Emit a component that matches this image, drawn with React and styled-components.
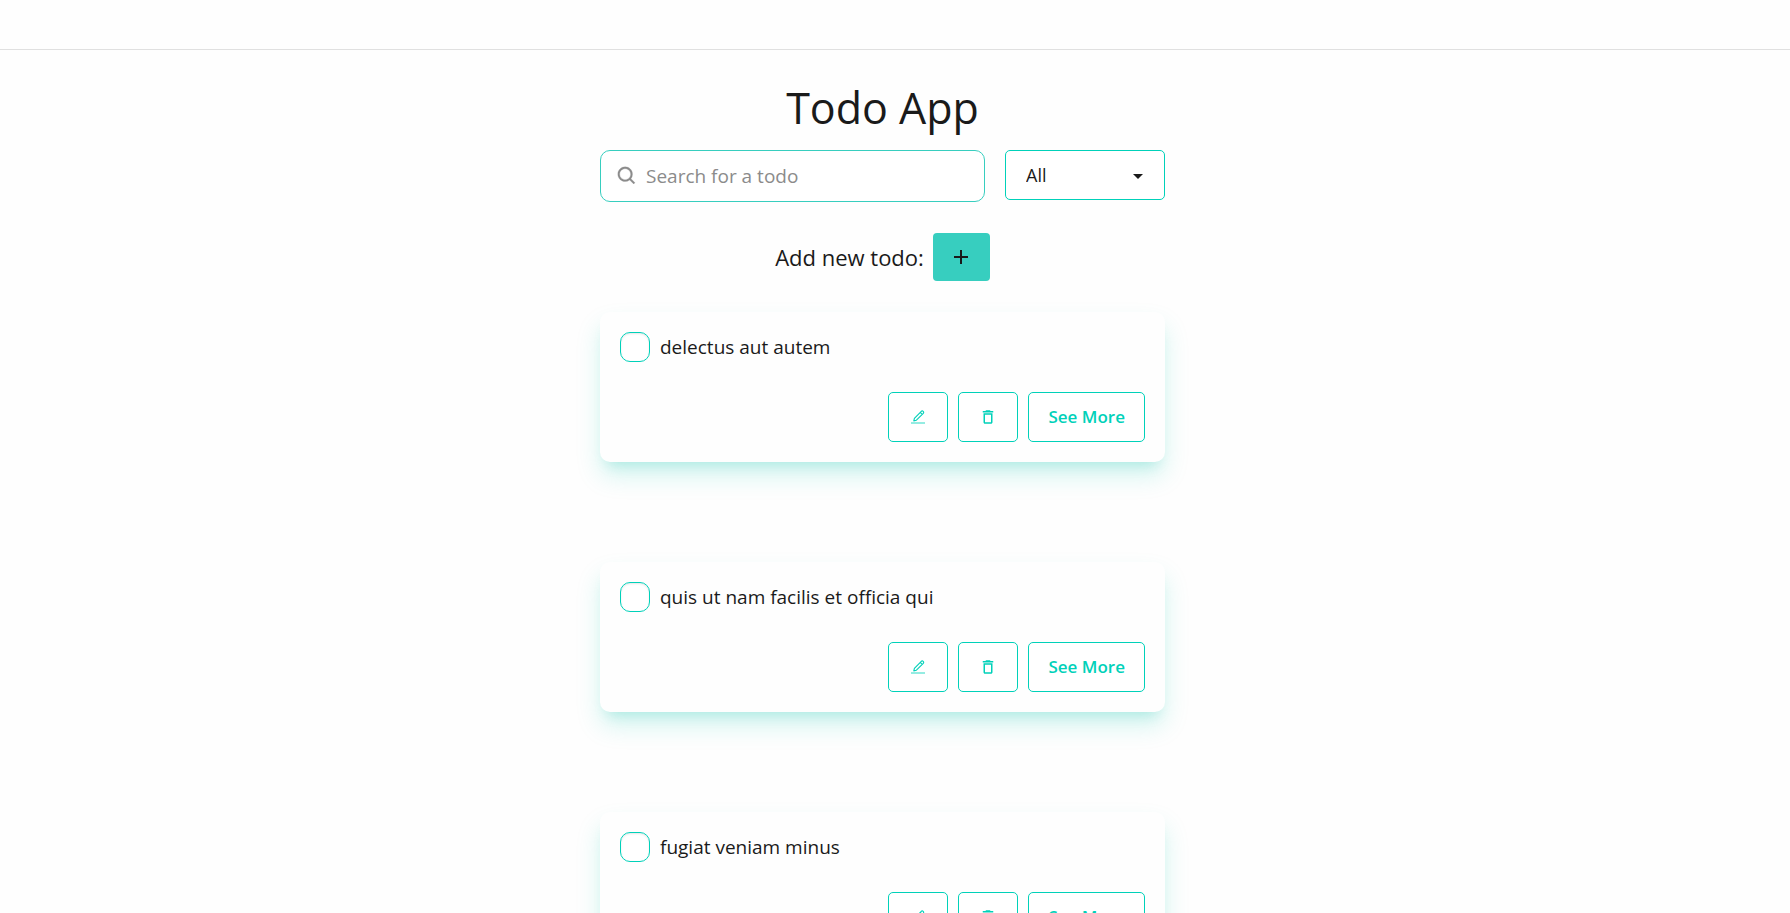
import React, { useState } from "react";
import styled, { createGlobalStyle } from "styled-components";
import { BiSearch } from "react-icons/bi";
import { MdAdd, MdDeleteOutline } from "react-icons/md";

const accent = "#00d1b9";

const GlobalStyle = createGlobalStyle`
  *, *::before, *::after { box-sizing: border-box; }
  body {
    margin: 0;
    background: #fefefe;
    color: #1a1a1a;
    font-family: "Segoe UI", "Open Sans", "Noto Sans", sans-serif;
    font-size: 19px;
    line-height: 24px;
  }
  button, input, select { font: inherit; color: inherit; }
`;

const Header = styled.header`
  height: 50px;
  border-bottom: 1px solid #e0e0e0;
`;

const Main = styled.main`
  display: flex;
  flex-direction: column;
  align-items: center;
  padding: 28px 25px 0 0;
`;

const Column = styled.div`
  display: flex;
  flex-direction: column;
  align-items: center;
  width: 100%;
  max-width: 565px;
`;

const Title = styled.h1`
  margin: 0 0 12px;
  font-size: 43px;
  font-weight: 400;
  line-height: 60px;
`;

const Filters = styled.div`
  display: flex;
  align-items: flex-start;
  gap: 20px;
  width: 100%;
`;

const SearchBox = styled.label`
  display: flex;
  flex: 1;
  align-items: center;
  gap: 8px;
  height: 52px;
  padding: 0 15px;
  border: 1px solid #37cebf;
  border-radius: 10px;
  background: #fff;
  color: #8b8b8b;
`;

const SearchInput = styled.input`
  flex: 1;
  min-width: 0;
  padding: 0;
  border: 0;
  outline: 0;
  background: transparent;
  &::placeholder { color: #8b8b8b; opacity: 1; }
`;

const SelectBox = styled.div`
  display: grid;
  align-items: center;
  width: 160px;
  height: 50px;
  border: 1px solid ${accent};
  border-radius: 5px;
  background: #fff;
  & > * { grid-area: 1 / 1; }
`;

const Select = styled.select`
  width: 100%;
  height: 100%;
  padding: 0 40px 0 20px;
  border: 0;
  border-radius: 5px;
  outline: 0;
  appearance: none;
  background: transparent;
  font-size: 18px;
`;

const Caret = styled.span`
  justify-self: end;
  margin: 2px 21px 0 0;
  border: 5px solid transparent;
  border-top-color: #1a1a1a;
  border-bottom: 0;
  pointer-events: none;
`;

const AddRow = styled.div`
  display: flex;
  align-items: center;
  gap: 9px;
  margin: 31px 0;
  font-size: 22px;
`;

const AddButton = styled.button`
  display: flex;
  align-items: center;
  justify-content: center;
  width: 57px;
  height: 48px;
  padding: 0;
  border: 0;
  border-radius: 4px;
  background: #37cebf;
`;

const TodoList = styled.ul`
  display: flex;
  flex-direction: column;
  gap: 100px;
  width: 100%;
  margin: 0;
  padding: 0 0 100px;
  list-style: none;
`;

const Card = styled.li`
  display: flex;
  flex-direction: column;
  gap: 30px;
  padding: 20px;
  border-radius: 10px;
  background: #fefefe;
  box-shadow: 0 14px 24px 0 rgba(0, 200, 180, 0.17), 0 10px 14px -8px rgba(0, 180, 160, 0.22);
`;

const TodoLabel = styled.label`
  display: flex;
  align-items: center;
  gap: 10px;
`;

const Checkbox = styled.input`
  width: 30px;
  height: 30px;
  margin: 0;
  border: 1px solid ${accent};
  border-radius: 10px;
  appearance: none;
  background: #fff;
  box-shadow: inset 0 1px 2px rgba(0, 0, 0, 0.1);
  &:checked { background: ${accent}; }
`;

const Actions = styled.div`
  display: flex;
  justify-content: flex-end;
  gap: 10px;
`;

const OutlineButton = styled.button`
  display: flex;
  align-items: center;
  justify-content: center;
  width: ${({ $icon }) => ($icon ? "60px" : "auto")};
  height: 50px;
  padding: ${({ $icon }) => ($icon ? "0" : "0 19px")};
  border: 1px solid ${accent};
  border-radius: 5px;
  background: #fff;
  color: ${accent};
  font-size: 17px;
  font-weight: 600;
`;

const todos = ["delectus aut autem", "quis ut nam facilis et officia qui", "fugiat veniam minus"];

function PencilIcon() {
  return (
    <svg width="14" height="14" viewBox="0 0 14 14" fill="none" stroke="currentColor" aria-hidden="true">
      <path
        d="M2.8 10.9 3.4 8.3 10.3 1.3Q11.3.5 12.2 1.4 13.1 2.3 12.3 3.3L5.4 10.2Z M9.2 2.4 11.2 4.4"
        strokeWidth="1.1"
        strokeLinejoin="round"
      />
      <path d="M0 13h14" strokeWidth="1.4" strokeOpacity="0.6" />
    </svg>
  );
}

function Todo({ title }) {
  const [done, setDone] = useState(false);
  return (
    <Card>
      <TodoLabel>
        <Checkbox type="checkbox" checked={done} onChange={() => setDone(!done)} />
        {title}
      </TodoLabel>
      <Actions>
        <OutlineButton $icon type="button" aria-label="Edit">
          <PencilIcon />
        </OutlineButton>
        <OutlineButton $icon type="button" aria-label="Delete">
          <MdDeleteOutline size={18} />
        </OutlineButton>
        <OutlineButton type="button">See More</OutlineButton>
      </Actions>
    </Card>
  );
}

export default function App() {
  return (
    <>
      <GlobalStyle />
      <Header />
      <Main>
        <Column>
          <Title>Todo App</Title>
          <Filters>
            <SearchBox>
              <BiSearch size={22} strokeWidth="0.3" />
              <SearchInput type="text" aria-label="Search for a todo" placeholder="Search for a todo" />
            </SearchBox>
            <SelectBox>
              <Select aria-label="Filter todos">
                <option>All</option>
              </Select>
              <Caret />
            </SelectBox>
          </Filters>
          <AddRow>
            Add new todo:
            <AddButton type="button" aria-label="Add todo">
              <MdAdd size={24} />
            </AddButton>
          </AddRow>
          <TodoList>
            {todos.map((title) => (
              <Todo key={title} title={title} />
            ))}
          </TodoList>
        </Column>
      </Main>
    </>
  );
}
